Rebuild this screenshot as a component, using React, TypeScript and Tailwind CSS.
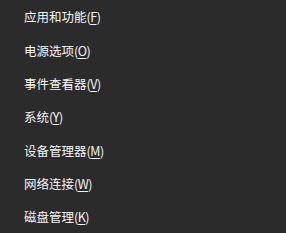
import React from "react";

const items: [string, string][] = [
  ["应用和功能", "F"],
  ["电源选项", "O"],
  ["事件查看器", "V"],
  ["系统", "Y"],
  ["设备管理器", "M"],
  ["网络连接", "W"],
  ["磁盘管理", "K"],
];

export default function App() {
  return (
    <div
      className="w-[286px] h-[233px] bg-[#2b2b2b] text-[#f5f5f5] text-[12.5px] pt-[1px] overflow-hidden"
      style={{ fontFamily: '"Noto Sans CJK SC", "Noto Sans", sans-serif' }}
    >
      {items.map(([label, key]) => (
        <div key={key} className="h-[33.33px] flex items-center pl-[24px]">
          <span>
            {label}
            <span className="tracking-[-0.5px]">
              (<span className="underline underline-offset-2">{key}</span>)
            </span>
          </span>
        </div>
      ))}
    </div>
  );
}
